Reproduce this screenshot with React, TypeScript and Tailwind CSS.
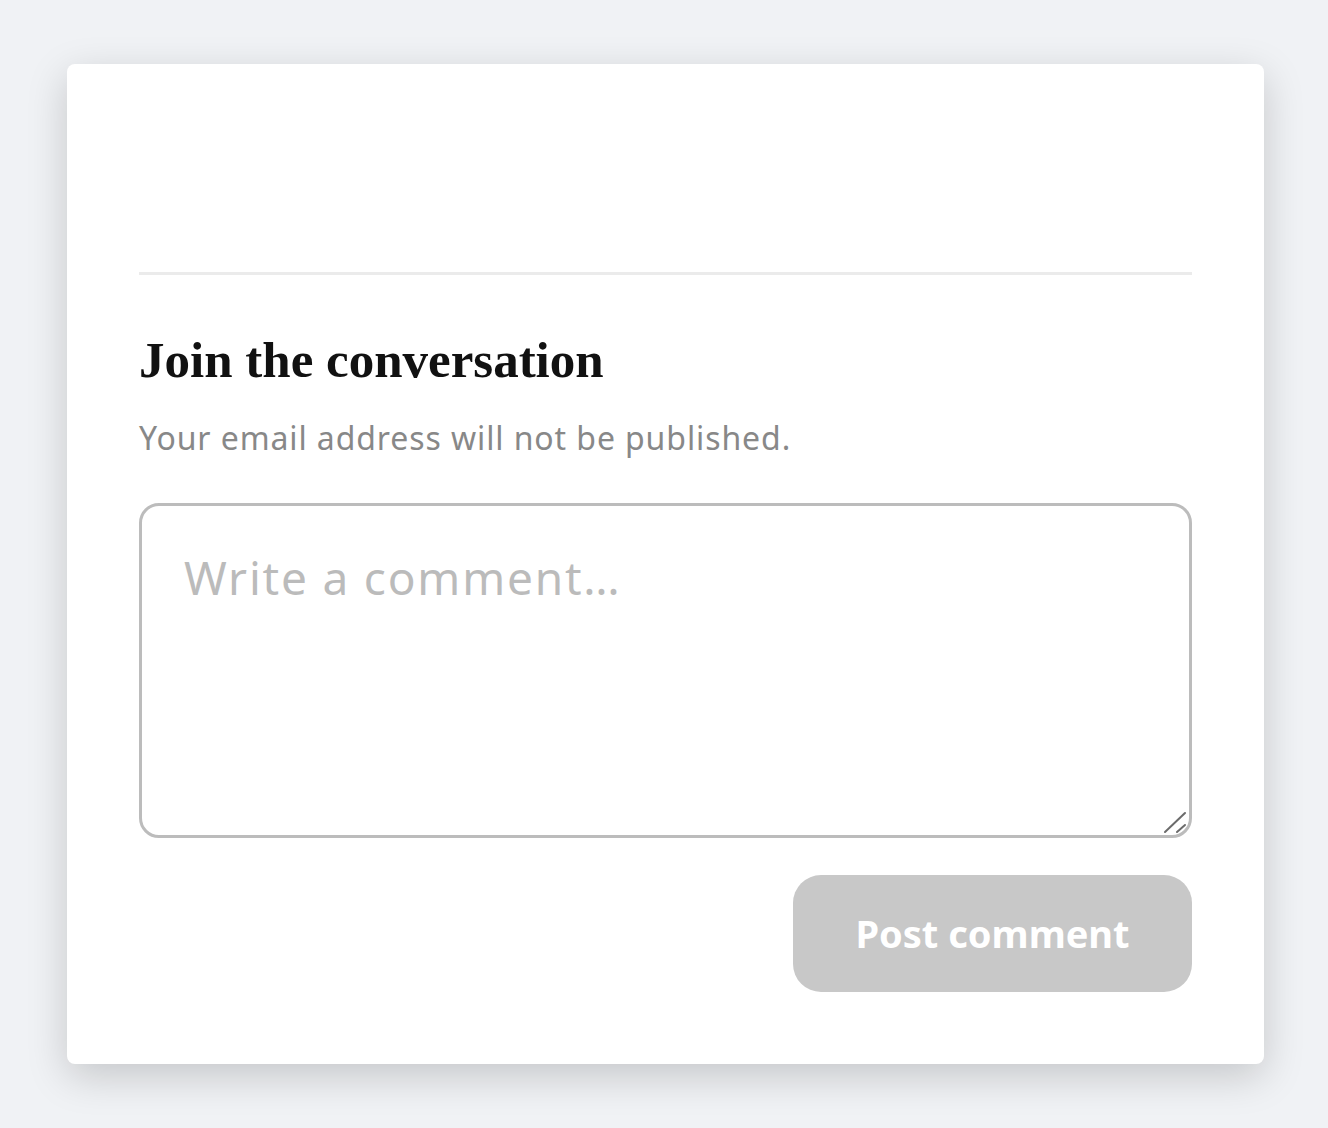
import { useState } from 'react';

const sans = "font-['Noto_Sans','Open_Sans',sans-serif]";

function ResizeGrip() {
    return (
        <svg width="30" height="30" viewBox="0 0 30 30" className="pointer-events-none absolute right-0 bottom-0">
            <line x1="3" y1="24" x2="23" y2="5" stroke="#6b6b6b" strokeWidth="2" strokeLinecap="round" />
            <line x1="15" y1="24" x2="23" y2="17" stroke="#6b6b6b" strokeWidth="2" strokeLinecap="round" />
        </svg>
    );
}

function CommentForm() {
    const [text, setText] = useState('');

    return (
        <div className="flex flex-col">
            <h2 className="font-['Liberation_Serif',serif] text-[51px] font-bold leading-[60px] text-[#111111]">Join the conversation</h2>
            <p className={sans + " mt-[25px] text-[32px] leading-[45px] tracking-[0.9px] text-[#888888]"}>Your email address will not be published.</p>
            <div className="relative mt-[43px]">
                <textarea
                    value={text}
                    onChange={(e) => setText(e.target.value)}
                    placeholder="Write a comment…"
                    className={sans + " block h-[335px] w-full resize-none rounded-[20px] border-[3px] border-[#bcbcbc] px-[42px] pt-[38px] text-[46px] leading-[66px] tracking-[1.8px] text-[#222222] outline-none placeholder:text-[#bbbbbb]"}
                />
                <ResizeGrip />
            </div>
            <div className="mt-[37px] flex justify-end">
                <button
                    disabled={!text}
                    className={sans + " h-[117px] w-[399px] rounded-[28px] bg-[#c8c8c8] text-[38px] font-bold text-white"}
                >
                    Post comment
                </button>
            </div>
        </div>
    );
}

export default function App() {
    return (
        <div className="min-h-screen bg-[#f0f2f5] px-[67px] pt-[64px]">
            <div className="w-[1197px] rounded-[8px] bg-white p-[72px] shadow-[0_12px_40px_rgba(0,0,0,0.18)]">
                <div className="h-[136px]"></div>
                <div className="h-[3px] bg-[#ebebeb] mb-[55px]"></div>
                <CommentForm />
            </div>
        </div>
    );
}
